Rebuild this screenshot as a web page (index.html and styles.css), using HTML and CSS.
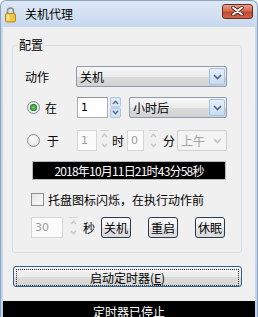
FILE: index.html
```html
<!DOCTYPE html>
<html lang="zh-CN">
<head>
    <meta charset="UTF-8">
    <title>关机代理</title>
    <link rel="stylesheet" href="styles.css">
</head>
<body>
<div class="window">
    <div class="titlebar">
        <svg class="app-icon" width="13" height="17" viewBox="0 0 13 17">
            <path d="M3.5 8 V5 a3 3 0 0 1 6 0 V8" fill="none" stroke="#8d8d86" stroke-width="1.6"/>
            <rect x="1.5" y="7.5" width="10" height="8.5" rx="1.5" fill="#f0c541" stroke="#b5861e"/>
            <rect x="2.5" y="8.5" width="3" height="6" fill="#f9e08a"/>
        </svg>
        <span class="title">关机代理</span>
        <div class="close">
            <svg width="13" height="10" viewBox="0 0 13 10">
                <path d="M2 1.5 L11 8.5 M11 1.5 L2 8.5" stroke="#5a2218" stroke-width="3.6" stroke-linecap="round"/>
                <path d="M2 1.5 L11 8.5 M11 1.5 L2 8.5" stroke="#fff" stroke-width="2" stroke-linecap="round"/>
            </svg>
        </div>
    </div>

    <div class="client">
        <fieldset class="group">
            <legend>配置</legend>

            <div class="row row-action">
                <span class="label">动作</span>
                <div class="combo combo-action">
                    <span class="combo-text">关机</span>
                    <span class="drop"><svg width="9" height="6" viewBox="0 0 9 6"><path d="M1 1 L4.5 4.5 L8 1" fill="none" stroke="#4b628a" stroke-width="1.6"/></svg></span>
                </div>
            </div>

            <div class="row row-after">
                <span class="option"><span class="radio checked"></span><span class="option-text">在</span></span>
                <span class="edit edit-hours">1</span>
                <svg class="spin" width="11" height="21" viewBox="0 0 11 21">
                    <rect x="0.5" y="0.5" width="10" height="9.5" rx="1.5" fill="#dbe8f6" stroke="#adc3dd"/>
                    <rect x="0.5" y="11" width="10" height="9.5" rx="1.5" fill="#d3e3f4" stroke="#adc3dd"/>
                    <path d="M3 7 L5.5 4.2 L8 7" fill="none" stroke="#4d6a94" stroke-width="1.4"/>
                    <path d="M3 13.8 L5.5 16.6 L8 13.8" fill="none" stroke="#4d6a94" stroke-width="1.4"/>
                </svg>
                <div class="combo combo-unit">
                    <span class="combo-text">小时后</span>
                    <span class="drop"><svg width="9" height="6" viewBox="0 0 9 6"><path d="M1 1 L4.5 4.5 L8 1" fill="none" stroke="#4b628a" stroke-width="1.6"/></svg></span>
                </div>
            </div>

            <div class="row row-at">
                <span class="option"><span class="radio"></span><span class="option-text option-at">于</span></span>
                <span class="edit disabled edit-hour">1</span>
                <svg class="spin spin-hour" width="11" height="21" viewBox="0 0 11 21">
                    <path d="M1 0.5 H10" stroke="#d4d4d4"/>
                    <path d="M3 7 L5.5 4.2 L8 7" fill="none" stroke="#c8c8c8" stroke-width="1.4"/>
                    <path d="M3 13.8 L5.5 16.6 L8 13.8" fill="none" stroke="#c8c8c8" stroke-width="1.4"/>
                </svg>
                <span class="unit unit-hour">时</span>
                <span class="edit disabled edit-minute">0</span>
                <svg class="spin spin-minute" width="11" height="21" viewBox="0 0 11 21">
                    <path d="M1 0.5 H10" stroke="#d4d4d4"/>
                    <path d="M3 7 L5.5 4.2 L8 7" fill="none" stroke="#c8c8c8" stroke-width="1.4"/>
                    <path d="M3 13.8 L5.5 16.6 L8 13.8" fill="none" stroke="#c8c8c8" stroke-width="1.4"/>
                </svg>
                <span class="unit unit-minute">分</span>
                <div class="combo disabled combo-ampm">
                    <span class="combo-text">上午</span>
                    <span class="drop"><svg width="9" height="6" viewBox="0 0 9 6"><path d="M1 1 L4.5 4.5 L8 1" fill="none" stroke="#c4c4c4" stroke-width="1.6"/></svg></span>
                </div>
            </div>

            <div class="clock">2018年10月11日21时43分58秒</div>

            <div class="row row-check">
                <span class="checkbox"></span>
                <span class="check-text">托盘图标闪烁，在执行动作前</span>
            </div>

            <div class="row row-delay">
                <span class="edit disabled edit-delay">30</span>
                <svg class="spin spin-delay" width="11" height="21" viewBox="0 0 11 21">
                    <path d="M1 0.5 H10" stroke="#d4d4d4"/>
                    <path d="M3 7 L5.5 4.2 L8 7" fill="none" stroke="#c8c8c8" stroke-width="1.4"/>
                    <path d="M3 13.8 L5.5 16.6 L8 13.8" fill="none" stroke="#c8c8c8" stroke-width="1.4"/>
                </svg>
                <span class="unit unit-sec">秒</span>
                <button class="btn btn-first">关机</button>
                <button class="btn">重启</button>
                <button class="btn">休眠</button>
            </div>
        </fieldset>

        <button class="start"><span class="focus">启动定时器(<u>E</u>)</span></button>

        <div class="status">定时器已停止</div>
    </div>
</div>
</body>
</html>
```

FILE: styles.css
```css
/* Window frame */
body {
    margin: 0;
    font-family: "Noto Sans CJK SC", sans-serif;
    font-size: 12px;
    color: #000;
}
.window {
    width: 258px;
    height: 317px;
    box-sizing: border-box;
    border: 1px solid #8ea3bd;
    border-bottom: none;
    border-radius: 6px 6px 0 0;
    background: linear-gradient(#dde8f5, #c8d9ee 26px, #c3d5ec);
    display: flex;
    flex-direction: column;
    overflow: hidden;
}
.titlebar {
    height: 26px;
    flex: none;
    display: flex;
    align-items: center;
    padding: 0 4px 0 3px;
}
.title {
    margin-left: 8px;
    line-height: 16px;
}
.close {
    margin-left: auto;
    margin-top: -6px;
    width: 31px;
    height: 15px;
    box-sizing: border-box;
    border: 1px solid #6f2a1f;
    border-radius: 3px;
    background: linear-gradient(#e6a08f, #d46a52 45%, #c3472f 55%, #d0654a);
    display: flex;
    align-items: center;
    justify-content: center;
}

/* Client area */
.client {
    flex: 1;
    margin: 0 2px;
    background: #f0f0f0;
    display: flex;
    flex-direction: column;
}
.group {
    margin: 10px 13px 0 9px;
    padding: 13px 0 14px 12px;
    border: 1px solid #d5dfe5;
    border-radius: 3px;
    min-width: 0;
}
.group legend {
    padding: 0 2px;
    margin-left: -8px;
    line-height: 16px;
}
.row {
    display: flex;
    align-items: center;
    height: 21px;
}
.row-after { margin-top: 10px; }
.row-at { margin-top: 12px; }
.row-check { margin-top: 9px; }
.row-delay { margin-top: 7px; }
.label {
    width: 51px;
}

/* Combo boxes */
.combo {
    height: 21px;
    box-sizing: border-box;
    border: 1px solid #8e9bac;
    border-radius: 2px;
    background: linear-gradient(#f7f7f7, #ececec 50%, #dcdcdc 51%, #d2d2d2);
    display: flex;
    align-items: center;
}
.combo-text {
    flex: 1;
    padding-left: 3px;
}
.drop {
    width: 16px;
    height: 17px;
    margin-right: 1px;
    box-sizing: border-box;
    border: 1px solid #a7c2e0;
    border-radius: 2px;
    background: linear-gradient(#e5f0fb, #c4dcf4);
    display: flex;
    align-items: center;
    justify-content: center;
}
.combo-action { width: 151px; }
.combo-unit { width: 98px; margin-left: 8px; }
.combo-ampm { width: 50px; margin-left: 2px; }
.combo.disabled {
    border-color: #cfcfcf;
    background: #f4f4f4;
    color: #a3a3a3;
}
.combo.disabled .drop {
    border-color: transparent;
    background: none;
}

/* Radio options */
.option {
    width: 52px;
    display: flex;
    align-items: center;
}
.radio {
    width: 13px;
    height: 13px;
    margin-left: 2px;
    box-sizing: border-box;
    border: 1px solid #8a8e94;
    border-radius: 50%;
    background: radial-gradient(circle at 40% 35%, #fff, #dcdcdc);
}
.radio.checked {
    background: radial-gradient(circle, #7fd07a 0, #3a9f37 2.6px, #2b7f2b 3.4px, #eef2f4 3.9px, #dcdcdc);
}
.option-text {
    margin-left: 5px;
}
.option-at {
    margin-left: 7px;
}

/* Edits and spins */
.edit {
    height: 21px;
    box-sizing: border-box;
    border: 1px solid #abadb3;
    border-top-color: #8c9099;
    background: #fff;
    font-family: "DejaVu Sans", sans-serif;
    font-size: 11px;
    line-height: 19px;
    padding-left: 3px;
}
.edit.disabled {
    border-color: #d6d6d6;
    background: #fbfbfb;
    color: #9c9c9c;
}
.edit-hours { width: 31px; }
.spin { flex: none; margin-left: 2px; }
.edit-hour { width: 20px; }
.unit-hour { margin-left: 2px; }
.edit-minute { width: 17px; margin-left: 3px; }
.spin-minute { margin-left: 4px; }
.unit-minute { margin-left: 4px; }
.edit-delay { width: 32px; margin-left: 6px; }
.spin-delay { margin-left: 5px; }
.unit-sec { margin-left: 4px; }

/* Clock display */
.clock {
    margin: 10px 0 0 7px;
    width: 194px;
    height: 19px;
    box-sizing: border-box;
    border: 1px solid #b9b9b9;
    background: #000;
    color: #fff;
    font-size: 12px;
    letter-spacing: -0.8px;
    line-height: 17px;
    text-align: center;
}

/* Checkbox */
.checkbox {
    width: 13px;
    height: 13px;
    margin-left: 6px;
    box-sizing: border-box;
    border: 1px solid #8e8f8f;
    background: linear-gradient(135deg, #e4e4e4, #fafafa);
}
.check-text {
    margin-left: 4px;
}

/* Buttons */
.btn {
    width: 30px;
    height: 21px;
    margin-left: 17px;
    padding: 0;
    box-sizing: border-box;
    border: 1px solid #283a52;
    border-radius: 3px;
    background: linear-gradient(#fbfbfb, #efefef 50%, #e3e3e3 51%, #dadada);
    font-family: inherit;
    font-size: 12px;
    line-height: 17px;
    color: #000;
}
.btn-first { margin-left: 6px; }
.start {
    margin: 13px 13px 0 10px;
    height: 21px;
    padding: 2px;
    box-sizing: border-box;
    border: 1px solid #2f5f95;
    border-radius: 3px;
    background: linear-gradient(#f6f6f6, #ebebeb 50%, #dddddd 51%, #d4d4d4);
    font-family: inherit;
    font-size: 12px;
    color: #000;
}
.focus {
    display: block;
    height: 15px;
    line-height: 15px;
    border: 1px dotted #333;
}
.status {
    flex: 1;
    margin-top: 14px;
    padding-top: 2px;
    background: #000;
    color: #fff;
    text-align: center;
    line-height: 17px;
}
```
